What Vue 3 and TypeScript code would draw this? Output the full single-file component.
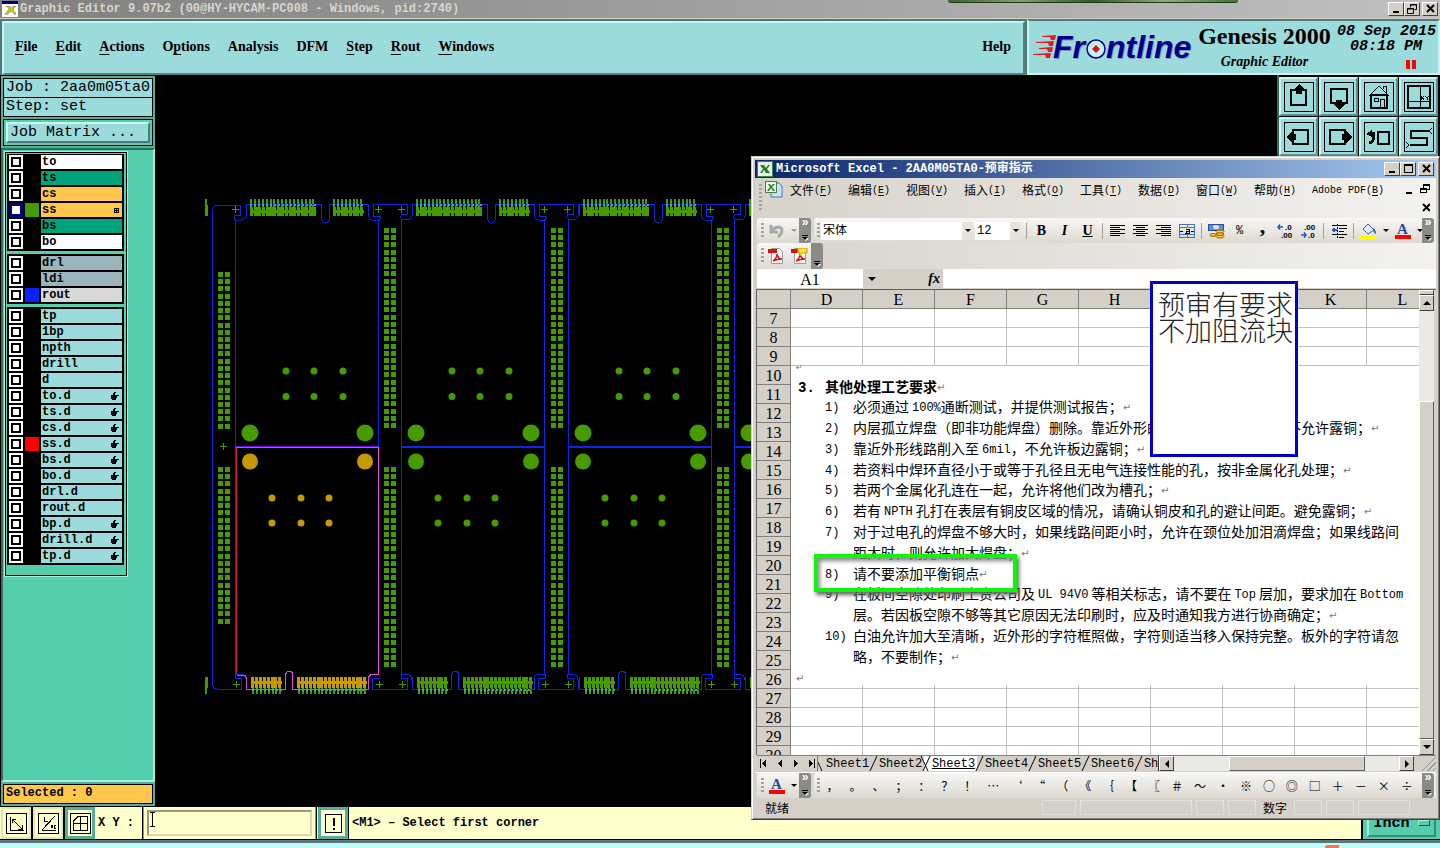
<script setup lang="ts">
import { ref } from 'vue'

interface Layer { name: string; tone: string; swatch?: string; hand?: boolean; grid?: boolean; active?: boolean }

const menus = [
  ['', 'F', 'ile'], ['', 'E', 'dit'], ['', 'A', 'ctions'], ['O', 'p', 'tions'], ['Analysis', '', ''],
  ['DFM', '', ''], ['', 'S', 'tep'], ['', 'R', 'out'], ['', 'W', 'indows'],
]

const layerGroups: Layer[][] = [
  [
    { name: 'to', tone: 'white' }, { name: 'ts', tone: 'green' }, { name: 'cs', tone: 'amber' },
    { name: 'ss', tone: 'amber', swatch: 'sw-green', grid: true, active: true },
    { name: 'bs', tone: 'green' }, { name: 'bo', tone: 'white' },
  ],
  [{ name: 'drl', tone: 'steel' }, { name: 'ldi', tone: 'steel' }, { name: 'rout', tone: 'silver', swatch: 'sw-blue' }],
  [
    { name: 'tp', tone: 'cyan' }, { name: '1bp', tone: 'cyan' }, { name: 'npth', tone: 'cyan' },
    { name: 'drill', tone: 'cyan' }, { name: 'd', tone: 'cyan' },
    { name: 'to.d', tone: 'cyan', hand: true }, { name: 'ts.d', tone: 'cyan', hand: true },
    { name: 'cs.d', tone: 'cyan', hand: true }, { name: 'ss.d', tone: 'cyan', hand: true, swatch: 'sw-red' },
    { name: 'bs.d', tone: 'cyan', hand: true }, { name: 'bo.d', tone: 'cyan', hand: true },
    { name: 'drl.d', tone: 'cyan' }, { name: 'rout.d', tone: 'cyan' }, { name: 'bp.d', tone: 'cyan', hand: true },
    { name: 'drill.d', tone: 'cyan', hand: true }, { name: 'tp.d', tone: 'cyan', hand: true },
  ],
]

const coords = ref('')

/* board artwork */
const boards = [0, 166, 333, 499].map((x, i) => ({ i, x }))
const fingers = (start: number, count: number) => Array.from({ length: count }, (_, i) => start + Math.round(i * 3.9))
const topFingers = [...fingers(250, 17), ...fingers(333, 8)]
const bottomFingers = [...fingers(252, 8), ...fingers(298, 18)]
const rows = (start: number, count: number) => Array.from({ length: count }, (_, i) => start + Math.round(i * 7.22))
const longRows = [...rows(228, 28), ...rows(467, 28)]
const edgeRows = [...rows(272, 22), ...rows(467, 22)]
const stripX = [384, 551, 717]
const crossX = [236, 379, 402, 545, 568, 711, 734]

const tools = ['up', 'down', 'home', 'quad', 'left', 'right', 'back', 'snake']

/* workbook */
const xlMenus = [['文件', 'F'], ['编辑', 'E'], ['视图', 'V'], ['插入', 'I'], ['格式', 'O'], ['工具', 'T'], ['数据', 'D'], ['窗口', 'W'], ['帮助', 'H']]
const cols = ['D', 'E', 'F', 'G', 'H', '', '', 'K', 'L']
const rowNumbers = Array.from({ length: 24 }, (_, i) => i + 7)
const sheets = ['Sheet1', 'Sheet2', 'Sheet3', 'Sheet4', 'Sheet5', 'Sheet6', 'Sheet7']
const symbols = ['，', '。', '、', '；', '：', '？', '！', '…', '‘', '“', '（', '《', '｛', '【', '〖', '＃', '～', '·', '※', '○', '◎', '□', '＋', '－', '×', '÷']
const font = ref('宋体')
const size = ref('12')

const docLines = [
  ['1)', '必须通过 100%通断测试，并提供测试报告；', '↵'],
  ['2)', '内层孤立焊盘（即非功能焊盘）删除。靠近外形的|不允许露铜；', '↵'],
  ['3)', '靠近外形线路削入至 6mil，不允许板边露铜；', '↵'],
  ['4)', '若资料中焊环直径小于或等于孔径且无电气连接性能的孔，按非金属化孔处理；', '↵'],
  ['5)', '若两个金属化孔连在一起，允许将他们改为槽孔；', '↵'],
  ['6)', '若有 NPTH 孔打在表层有铜皮区域的情况，请确认铜皮和孔的避让间距。避免露铜；', '↵'],
  ['7)', '对于过电孔的焊盘不够大时，如果线路间距小时，允许在颈位处加泪滴焊盘；如果线路间', ''],
  ['', '距大时，则允许加大焊盘；', '↵'],
  ['8)', '请不要添加平衡铜点', '↵'],
  ['9)', '在板间空隙处印刷上贵公司及 UL 94V0 等相关标志，请不要在 Top 层加，要求加在 Bottom', ''],
  ['', '层。若因板空隙不够等其它原因无法印刷时，应及时通知我方进行协商确定；', '↵'],
  ['10)', '白油允许加大至清晰，近外形的字符框照做，字符则适当移入保持完整。板外的字符请忽', ''],
  ['', '略，不要制作；', '↵'],
]
const parts = (s: string) => s.split(/( ?[A-Za-z0-9]+(?: [A-Za-z0-9]+)*[% ]?|\|)/).filter(p => p !== '')
const isLatin = (s: string) => /[A-Za-z0-9]/.test(s)
</script>

<template>
  <div class="desk">
    <div class="photo-edge"></div>
    <header class="titlebar">
      <svg class="app-ico" width="16" height="16" viewBox="0 0 16 16" shape-rendering="crispEdges"><rect width="16" height="16" fill="#fff" /><rect width="16" height="3" fill="#00007b" /><path d="M4 5l3 3-4 5h3l3-3 3 3h2l-3-5 3-3h-3l-2 2-2-2z" fill="#cfc700" stroke="#777" stroke-width=".5" /></svg>
      <span>Graphic Editor 9.07b2 (00@HY-HYCAM-PC008 - Windows, pid:2740)</span>
      <div class="winbtns">
        <button aria-label="Minimize"><svg width="11" height="10"><path d="M2 8h6" stroke="#000" stroke-width="2" /></svg></button>
        <button aria-label="Restore"><svg width="11" height="10" fill="none" stroke="#000"><path d="M3.500 3.500v-3h6v5h-2M3 1h7M.5 4.500h6v5h-6zM0 5h7" /></svg></button>
        <button class="gap" aria-label="Close"><svg width="11" height="10"><path d="M2 1l7 7M9 1l-7 7" stroke="#000" stroke-width="2" /></svg></button>
      </div>
    </header>

    <div class="top">
      <nav class="menubar">
        <button v-for="m in menus" :key="m.join('')">{{ m[0] }}<u>{{ m[1] }}</u>{{ m[2] }}</button>
        <button class="help">Help</button>
      </nav>
      <div class="brand">
        <svg class="logo" width="162" height="36" viewBox="0 0 162 36">
          <g fill="#f01820"><path d="M9 7l14-1-1 5h-4l-1-3H9z" /><path d="M3 13l18-1-1 5h-4l-1-3H3z" /><path d="M6 19l14-1-1 5h-4l-1-3H6z" /><path d="M0 25l18-1-1 5h-4l-1-3H0z" /></g>
          <g fill="#8a93b8" class="lt"><text x="21" y="30">Fr</text><text x="74" y="30">ntline</text></g>
          <g fill="#00008c" class="lt"><text x="20" y="29">Fr</text><text x="73" y="29">ntline</text></g>
          <circle cx="63" cy="20" r="9" fill="#c4f1f2" stroke="#00008c" stroke-width="1.500" />
          <path d="M63 16l4 4-4 4-4-4z" fill="#e81018" />
        </svg>
        <div class="product"><h1>Genesis 2000</h1><em>Graphic Editor</em></div>
        <div class="clock"><span>08 Sep 2015</span><span class="time">08:18 PM</span><i class="pause"></i></div>
      </div>
    </div>

    <main class="work">
      <aside class="side">
        <div class="job">
          <div class="jobline">Job : 2aa0m05ta0</div>
          <div class="jobline step">Step: set</div>
          <div class="jm"><button>Job Matrix ...</button></div>
        </div>
        <div class="layers-pane">
          <div class="layers">
            <div v-for="(g, gi) in layerGroups" :key="gi" class="group">
              <label v-for="l in g" :key="l.name" class="layer">
                <input type="checkbox" :class="{ on: l.active }" />
                <i class="swatch" :class="l.swatch"></i>
                <span :class="l.tone">{{ l.name }}
                  <svg v-if="l.hand" width="8" height="8" viewBox="0 0 8 8" shape-rendering="crispEdges"><path d="M3 0h2v1h-1v2h4v1H6v2H5v2H1V7H0V3h2V1h1z" /></svg>
                  <svg v-if="l.grid" width="5" height="5" viewBox="0 0 5 5" fill="none" stroke="#000" shape-rendering="crispEdges"><path d="M0 .5h5M0 2.500h5M0 4.500h5M.5 0v5M2.500 0v5M4.500 0v5" /></svg>
                </span>
              </label>
            </div>
          </div>
        </div>
        <div class="selected"><span>Selected : 0</span></div>
      </aside>

      <div class="canvas">
        <svg width="600" height="732" viewBox="156 76 600 732" fill="none" shape-rendering="crispEdges">
          <g fill="#479b00">
            <path d="M205 199h2v6h1v11h-3zM205 677h3v11h-1v6h-2z" />
            <template v-for="y in edgeRows" :key="'e' + y"><rect x="218" :y="y" width="5" height="5" /><rect x="225" :y="y" width="5" height="5" /></template>
            <template v-for="x in stripX" :key="'s' + x">
              <template v-for="y in longRows" :key="y"><rect :x="x" :y="y" width="5" height="5" /><rect :x="x + 7" :y="y" width="5" height="5" /></template>
            </template>
          </g>
          <g stroke="#479b00">
            <path v-for="x in crossX" :key="x" :d="`M${x - 4} 209.500h7M${x - .5} 206v7M${x - 3} 684.500h7M${x + .5} 681v7`" />
            <path d="M220 446.500h7M223.500 443v7" />
          </g>
          <path d="M212.500 685V213q0-8 6-8H240.500v10h-6v4q2 2 7 1q5-2 5-4V205M212.500 685q1 4 5 4H241.500v-11h-6v-4h7q5 2 4 15" stroke="#0a28e8" />
          <g v-for="b in boards" :key="b.i" :transform="`translate(${b.x} 0)`">
            <g fill="#479b00">
              <template v-for="(x, n) in topFingers" :key="'t' + x"><rect :x="x" y="199" width="2" height="8" /><rect :x="x" y="207" :width="n % 3 === 1 ? 4 : 3" height="9" /><rect :x="x" y="210" width="4" height="3" /></template>
              <rect v-for="x in bottomFingers" :key="'b' + x" :x="x" y="687" width="2" height="7" />
            </g>
            <g :fill="b.i ? '#479b00' : '#c49a00'">
              <template v-for="x in bottomFingers" :key="'f' + x"><rect :x="x - 1" y="677" width="3" height="11" /><rect :x="x - 1" y="681" width="4" height="3" /></template>
            </g>
            <g stroke="#0a28e8">
              <path d="M235.500 219V447M378.500 219V447M246.500 216V204.500H321.500V217q0 6 4 6t4-6V204.500H368.500V216q1 4 4 4h7q2-2-1-4h-5V204.500H407.500v10h-6q-2 4 1 5h7q4-2 3-15" />
              <path v-if="b.i" d="M235.500 447V674M378.500 447V674M246.500 677V689.500H285.500V675q1-4 4-4t3 4V689.500H368.500V677q1-3 4-3h7v4h-7V689.500H407.500v-11h-6v-4h7q5 2 4 15" />
              <path v-else d="M372.500 689.500v-11h7M372 689.500H407.500v-11h-6v-4h7q5 2 4 15M235.500 447V674" />
              <path v-if="b.i" d="M236 447H379" stroke-width="2" />
            </g>
            <g stroke="#28b8a0"><path d="M250 204.500h67M333 204.500h30M252 689.500h30M298 689.500h68" stroke-dasharray="2 2" stroke-width="2" /></g>
            <g :fill="b.i ? '#479b00' : '#c49a00'" shape-rendering="auto">
              <circle cx="250" cy="461.500" r="8" /><circle cx="365" cy="461.500" r="8" />
              <template v-for="x in [272, 301, 329]" :key="x"><circle :cx="x" cy="498" r="3.500" /><circle :cx="x" cy="523" r="3.500" /></template>
            </g>
            <g fill="#479b00" shape-rendering="auto">
              <circle cx="250" cy="433" r="8.500" /><circle cx="365" cy="433" r="8.500" />
              <template v-for="x in [286, 314, 343]" :key="x"><circle :cx="x" cy="371" r="3.500" /><circle :cx="x" cy="396.500" r="3.500" /></template>
            </g>
          </g>
          <path d="M236.500 448V674" stroke="#d01840" />
          <path d="M236 446.500H379" stroke="#6a00ff" />
          <path d="M236 447.500H378.500V674.500h-6q-4 0-4 4V689.500H292.500V675q0-4-3-4t-4 4V689.500H246.500V679q0-4-4-4h-6" stroke="#e048e0" />
        </svg>
      </div>

      <div class="tools">
        <button v-for="t in tools" :key="t" :aria-label="t">
          <svg width="30" height="30" viewBox="0 0 30 30" fill="none" stroke="#000" shape-rendering="crispEdges">
            <rect x=".5" y=".5" width="29" height="29" />
            <g v-if="t === 'up'"><path d="M12 8H7v15h15V8h-4" stroke-width="2" /><path d="M15 2l6 6h-3v4h-6V8H9z" fill="#000" stroke="none" /></g>
            <g v-if="t === 'down'"><path d="M12 21H7V7h16v14h-5" stroke-width="2" /><path d="M15 28l6-6h-3v-4h-6v4H9z" fill="#000" stroke="none" /></g>
            <g v-if="t === 'home'"><path d="M5 14L15 4l10 10" shape-rendering="auto" /><path d="M7 13v13h16V13M7 13h16" stroke-width="2" /><path d="M10.500 16.500h4v3h-4zM16.500 26v-9h4v9M19.500 7V4h3v7" /></g>
            <g v-if="t === 'quad'"><rect x="4" y="4" width="22" height="22" stroke-width="2" /><path d="M16.500 4v22M4 19.500h22M17 14l3 4M20 14l-3 4M21 14l2 2 2-2M23 16v2" /></g>
            <g v-if="t === 'left'"><path d="M9 13V8h15v14H9v-5" stroke-width="2" /><path d="M2 15l6-6v3h4v6H8v3z" fill="#000" stroke="none" /></g>
            <g v-if="t === 'right'"><path d="M21 13V8H6v14h15v-5" stroke-width="2" /><path d="M28 15l-6-6v3h-4v6h4v3z" fill="#000" stroke="none" /></g>
            <g v-if="t === 'back'"><path d="M14 10h11v12H14z" stroke-width="2" /><path d="M5 11h4v7q0 2-4 3" stroke-width="3" /><path d="M2 12l6-4v7z" fill="#000" stroke="none" /></g>
            <g v-if="t === 'snake'"><path d="M25 9H7v7h16v7H6" stroke-width="2" /><path d="M28 6l-3 3 3 3M2 20l3 3-3 3" /></g>
          </svg>
        </button>
      </div>
    </main>

    <footer class="cmd">
      <button aria-label="Diagonal"><svg width="21" height="21" fill="none" stroke="#000" shape-rendering="crispEdges"><path d="M.5.5h20v20H.5zM4.500 4v13h13M6 6l10 10M6 10V6h4M12 16h4v-4" /></svg></button>
      <button aria-label="Angle"><svg width="21" height="21" fill="none" stroke="#000" shape-rendering="crispEdges"><path d="M.5.5h20v20H.5zM4 17L17 3M4 17.500h14M6.500 4v4h3M13 12l2 3M15 12l-2 3M18 12h-2v3h2" /></svg></button>
      <button class="lit" aria-label="Grid"><svg width="21" height="21" fill="none" stroke="#000" shape-rendering="crispEdges"><path d="M.5.5h20v20H.5zM3.500 8l5-5h9v14h-14zM3 10.500h14M10.500 3v14" /></svg></button>
      <label for="xy">X Y :</label>
      <div class="field"><input id="xy" v-model="coords" type="text" /><svg class="ibeam" width="7" height="15" fill="none" stroke="#000"><path d="M1 .5h5M1 14.500h5M3.500 1v13" /></svg></div>
      <button class="lit" aria-label="Alert"><svg width="17" height="19" fill="none" stroke="#000" shape-rendering="crispEdges"><path d="M.5.5h16v18H.5z" /><path d="M8.500 4v8M8.500 14v2" stroke-width="2" /></svg></button>
      <p>&lt;M1&gt; – Select first corner</p>
      <div class="unit"><button>Inch<i></i></button></div>
    </footer>
    <div class="strip"><i></i></div>

    <section class="xl">
      <header class="xl-title">
        <svg width="16" height="16" viewBox="0 0 16 16"><rect x=".5" y=".5" width="15" height="15" fill="#e6f2df" stroke="#3b8544" /><path d="M3 4h4l2 3 2-3h2l-3 4 3 4H9L7 9l-2 3H3l3-4z" fill="#237a31" /></svg>
        <span>Microsoft Excel - 2AA0M05TA0-预审指示</span>
        <div class="winbtns">
          <button aria-label="Minimize"><svg width="11" height="10"><path d="M2 8h6" stroke="#000" stroke-width="2" /></svg></button>
          <button aria-label="Maximize"><svg width="11" height="10" fill="none" stroke="#000" shape-rendering="crispEdges"><path d="M1.500.5h8v8h-8zM1 1.500h9" /></svg></button>
          <button class="gap" aria-label="Close"><svg width="11" height="10"><path d="M2 1l7 7M9 1l-7 7" stroke="#000" stroke-width="2" /></svg></button>
        </div>
      </header>
      <nav class="xl-menu">
        <i class="grip"></i>
        <svg class="doc-ico" width="18" height="17" viewBox="0 0 18 17"><path d="M6 2h8l3 3v11H6z" fill="#cfe0fa" stroke="#4a72b5" /><rect x=".5" y=".5" width="11" height="11" fill="#e8f4e4" stroke="#3b8544" /><path d="M3 3h2l1 2 2-2h2L7 6l3 4H8L6 7l-2 3H2l3-4z" fill="#237a31" /></svg>
        <button v-for="m in xlMenus" :key="m[1]">{{ m[0] }}<b>(<u>{{ m[1] }}</u>)</b></button>
        <button class="pdf"><b>Adobe PDF(<u>B</u>)</b></button>
        <svg class="mdi" width="24" height="32" fill="none" stroke="#000" shape-rendering="crispEdges"><path d="M0 11.500h6M0 12.500h6M17.500 6.500v-3h6v5h-3M17 4.500h7M14.500 7.500h6v4h-6zM14 8.500h7" /><path d="M17 23l7 7M24 23l-7 7" stroke-width="2" shape-rendering="auto" /></svg>
      </nav>
      <div class="bar">
        <div class="tb undo"><i class="grip"></i><button aria-label="Undo"><svg width="16" height="14" fill="none" stroke="#a9a9a9" stroke-width="3"><path d="M3 6q8-6 10 0q0 4-4 7M2 1v7h7" /></svg></button><i class="dd dim"></i></div>
        <i class="cap"><b>»</b></i>
        <div class="tb wide">
          <i class="grip"></i>
          <label class="combo font"><select v-model="font" aria-label="Font"><option>宋体</option></select><i class="dd"></i></label>
          <label class="combo size"><select v-model="size" aria-label="Font size"><option>12</option></select><i class="dd"></i></label>
          <i class="sep"></i>
          <button class="fmt">B</button><button class="fmt it">I</button><button class="fmt un">U</button>
          <i class="sep"></i>
          <button aria-label="Align left"><svg width="15" height="12" stroke="#000" shape-rendering="crispEdges"><path d="M0 .5h15M0 2.500h10M0 4.500h15M0 6.500h10M0 8.500h15M0 10.500h10" /></svg></button>
          <button aria-label="Center"><svg width="15" height="12" stroke="#000" shape-rendering="crispEdges"><path d="M0 .5h15M3 2.500h9M0 4.500h15M3 6.500h9M0 8.500h15M3 10.500h9" /></svg></button>
          <button aria-label="Align right"><svg width="15" height="12" stroke="#000" shape-rendering="crispEdges"><path d="M0 .5h15M5 2.500h10M0 4.500h15M5 6.500h10M0 8.500h15M5 10.500h10" /></svg></button>
          <button aria-label="Merge"><svg width="16" height="14" fill="none" stroke="#4a72b5" shape-rendering="crispEdges"><path d="M.5.5h15v13H.5zM1 3.500h14M1 10.500h14M8.500 0v4M8.500 10v4" /><path d="M1 7h3M12 7h3M7 5h3v4M7 9V7h3M6 9h5" stroke="#000" /></svg></button>
          <i class="sep"></i>
          <button aria-label="Currency"><svg width="17" height="16"><rect x=".5" y="1.500" width="15" height="6" fill="#5f8be0" stroke="#284f9c" /><ellipse cx="8" cy="4" rx="3" ry="2" fill="#dce8ff" /><g fill="#ffc93c" stroke="#9a6500"><ellipse cx="5" cy="12" rx="3" ry="1.500" /><ellipse cx="12" cy="13.500" rx="4" ry="1.500" /><ellipse cx="12" cy="11" rx="4" ry="1.500" /><ellipse cx="12" cy="8.500" rx="4" ry="1.500" /></g></svg></button>
          <button class="pct">%</button><button class="comma">,</button>
          <button class="dec" aria-label="Increase decimal"><svg width="18" height="16"><path d="M1 4h5M3 1.500L1 4l2 2.500" fill="none" stroke="#1c58d0" stroke-width="1.500" /><text x="8" y="7">.0</text><text x="4" y="15">.00</text></svg></button>
          <button class="dec" aria-label="Decrease decimal"><svg width="18" height="16"><path d="M1 12h5M4 9.500L6 12l-2 2.500" fill="none" stroke="#1c58d0" stroke-width="1.500" /><text x="4" y="7">.00</text><text x="8" y="15">.0</text></svg></button>
          <i class="sep"></i>
          <button aria-label="Indent"><svg width="16" height="14" stroke="#000" shape-rendering="crispEdges"><path d="M1 1.500h15M8 4.500h8M8 7.500h5M1 10.500h15M8 13h5" /><path d="M6.500 0v14" stroke-dasharray="2 1" /><path d="M1 6h5M3 4v4" stroke="#1c58d0" stroke-width="2" /></svg></button>
          <i class="sep"></i>
          <button aria-label="Fill color"><svg width="17" height="16"><path d="M3 6l5-5 6 6-6 4z" fill="#e8f0ff" stroke="#3a5fa8" /><path d="M13 5q3 1 3 6q-3-1-3-6" fill="#3a5fa8" /><rect y="12" width="16" height="4" fill="#ffff00" /></svg></button><i class="dd"></i>
          <button aria-label="Font color"><svg width="16" height="16"><text class="ac" x="2" y="11">A</text><rect y="12" width="16" height="4" fill="#ff0000" /></svg></button><i class="dd"></i>
        </div>
        <i class="cap"><b>»</b></i>
      </div>
      <div class="bar second">
        <div class="tb">
          <i class="grip"></i>
          <button v-for="n in 2" :key="n" :aria-label="'PDF ' + n"><svg width="17" height="16"><path d="M3.500.5h8l3 3v12h-11z" fill="#fff" stroke="#9b9b9b" /><rect y="1" width="9" height="4" fill="#e01010" /><path d="M5 13q4-3 4-7q1 5 5 5q-5 0-9 2" fill="none" stroke="#e01010" stroke-width="1.500" /><path v-if="n === 2" d="M7 0h9v5h-5l-2 3V5H7z" fill="#ffe02a" stroke="#c9a200" /></svg></button>
        </div>
        <i class="cap"></i>
      </div>
      <div class="formula">
        <input class="name" value="A1" aria-label="Name box" />
        <i class="dd"></i><em>fx</em>
        <input class="fx" value="" aria-label="Formula" />
      </div>

      <div class="book">
        <div class="grid-area">
          <table>
            <thead><tr><th class="corner"></th><th v-for="(c, i) in cols" :key="i">{{ c }}</th></tr></thead>
            <tbody><tr v-for="r in rowNumbers" :key="r"><th>{{ r }}</th><td v-for="(c, i) in cols" :key="i"></td></tr></tbody>
          </table>
          <article class="doc">
            <i class="ret first">↵</i>
            <h2><span>3.</span>其他处理工艺要求<i class="ret">↵</i></h2>
            <div class="lines">
              <p v-for="(l, i) in docLines" :key="i">
                <span class="no">{{ l[0] }}</span><template v-for="(p, j) in parts(l[1])" :key="j"><i v-if="p === '|'" class="hidden-run"></i><span v-else-if="isLatin(p)" class="lat" :class="{ tight: !p.endsWith(' ') }">{{ p.trim() }}</span><template v-else>{{ p }}</template></template><i v-if="l[2]" class="ret">↵</i>
              </p>
            </div>
            <i class="ret last">↵</i>
          </article>
          <div class="mark"></div>
        </div>
        <div class="vscroll"><i class="split"></i><button aria-label="Scroll up"><i class="tri up"></i></button><i class="room"></i><i class="thumb"></i><button aria-label="Scroll down"><i class="tri"></i></button></div>
      </div>

      <div class="tabs">
        <div class="nav"><svg width="58" height="9" shape-rendering="crispEdges"><path d="M4 0v9H3V0zM9 0v9L5 4.500zM25 0v9l-4-4.500zM37 0v9l4-4.500zM52 0v9l4-4.500zM57 0v9h1V0z" /></svg></div>
        <div class="sheets"><button v-for="s in sheets" :key="s" :class="{ cur: s === 'Sheet3' }"><span>{{ s }}</span></button></div>
        <div class="hscroll"><button aria-label="Scroll left"><i class="tri l"></i></button><i class="room"></i><i class="thumb"></i><i class="room short"></i><button aria-label="Scroll right"><i class="tri r"></i></button></div>
        <i class="size-grip"></i>
      </div>

      <div class="bar bottom">
        <div class="tb"><i class="grip"></i><button aria-label="Font color"><svg width="16" height="16"><text class="ac" x="2" y="11">A</text><rect y="12" width="16" height="4" fill="#ff0000" /></svg></button><i class="dd"></i></div>
        <i class="cap"><b>»</b></i>
        <div class="tb wide"><i class="grip"></i><div class="syms"><button v-for="s in symbols" :key="s">{{ s }}</button></div></div>
        <i class="cap"><b>»</b></i>
      </div>
      <div class="xl-status"><span>就绪</span><i class="w34"></i><i class="w112"></i><i></i><i></i><b>数字</b><i></i><i></i><i class="w52"></i></div>

      <div class="note">预审有要求<br />不加阻流块</div>
    </section>
  </div>
</template>

<style>
html, body { margin: 0; background: #000; overflow: hidden; }
</style>

<style scoped>
* { box-sizing: border-box; }
button { font: inherit; color: inherit; padding: 0; margin: 0; border: 0; background: none; display: flex; align-items: center; justify-content: center; }
button svg, .app-ico { flex: none; display: block; }
i { font-style: normal; }
.desk { position: relative; height: 100vh; display: flex; flex-direction: column; background: #000; color: #000; font-family: "Liberation Mono", "Noto Sans CJK SC", monospace; overflow: hidden; }
.photo-edge { position: absolute; top: 0; right: 202px; width: 290px; height: 3px; background: linear-gradient(90deg, #41602f, #8a9a74, #35572a, #9aa58e, #45702f); border-bottom: 1px solid #1e3a12; border-radius: 0 0 4px 4px; }
.titlebar { flex: none; height: 19px; display: flex; align-items: center; gap: 2px; padding: 0 2px; background: linear-gradient(90deg, #808080, #c0c0c0); color: #d8d4cc; font-size: 12px; font-weight: bold; border-bottom: 1px solid #d4d0c8; }
.titlebar span, .xl-title span { flex: 1; white-space: nowrap; }
.winbtns { display: flex; }
.winbtns button { width: 16px; height: 14px; background: #d4d0c8; border: 1px solid; border-color: #fff #404040 #404040 #fff; }
.winbtns .gap { margin-left: 2px; }

.top { flex: none; height: 56px; display: flex; background: #4f7a78; }
.menubar { flex: 1; display: flex; align-items: center; gap: 18px; padding: 0 12px 2px 11px; margin: 2px 2px 0 2px; background: #9cdbdb; border: 2px solid; border-color: #c8f4f4 #5a8080 #5a8080 #c8f4f4; font-family: "Liberation Serif", serif; font-size: 14px; font-weight: bold; }
.menubar button { display: block; }
.menubar u { text-underline-offset: 3px; }
.menubar .help { margin-left: auto; }
.brand { flex: none; width: 413px; display: flex; align-items: flex-start; background: #9cdbdb; border: 2px solid; border-color: #4f7a78 #c8f4f4 #c8f4f4 #c8f4f4; }
.logo { flex: none; margin: 8px 1px 0 4px; }
.lt { font: italic bold 32px "Liberation Sans", sans-serif; }
.product { font-family: "Liberation Serif", serif; width: 137px; text-align: center; white-space: nowrap; }
.product h1 { margin: 0; font-size: 24px; line-height: 30px; font-weight: bold; }
.product em { display: block; font-size: 14px; line-height: 22px; font-weight: bold; }
.clock { flex: 1; display: flex; flex-direction: column; align-items: flex-end; padding: 3px 2px 0 0; font-size: 15px; font-style: italic; font-weight: bold; line-height: 15px; white-space: nowrap; }
.time { padding-right: 14px; }
.pause { width: 10px; height: 9px; margin: 6px 20px 0 0; border: solid #f00; border-width: 0 4px; }

.work { flex: 1; min-height: 0; display: flex; }
.side { flex: none; width: 156px; display: flex; flex-direction: column; padding: 1px 1px 1px 1px; }
.job { background: #54b09a; padding: 2px; display: flex; flex-direction: column; font-size: 15px; height: 72px; }
.jobline { border: 1px solid #000; background: #9cdbdb; height: 20px; line-height: 18px; padding-left: 2px; white-space: nowrap; }
.step { height: 19px; line-height: 17px; border-top: 0; }
.jm { margin-top: 2px; border: 1px solid #000; background: #54cead; padding: 2px; height: 27px; }
.jm button { width: 100%; height: 21px; justify-content: flex-start; padding-left: 2px; background: #9cdbdb; border: 2px solid; border-color: #c8f8f0 #4f7a78 #4f7a78 #c8f8f0; }
.layers-pane { flex: 1; background: #54cead; border: 2px solid; border-color: #2f6a5c #a8eedb #a8eedb #3a6b62; padding: 2px 0 0 2px; }
.layers { width: 122px; height: 424px; padding: 1px; border: 1px solid #000; outline: 1px solid #a8eedb; background: #54cead; display: flex; flex-direction: column; gap: 3px; }
.group { background: #000; padding: 0 1px 1px; width: 117px; }
.group + .group { padding-top: 1px; }
.layer { display: flex; align-items: center; gap: 2px; height: 16px; }
.layer input { appearance: none; margin: 0 0 0 1px; width: 14px; height: 14px; border: 2px solid #fff; background: #fff; box-shadow: inset 0 0 0 2px #000; }
.layer input.on { border-color: #00008c; box-shadow: inset 0 0 0 1px #00008c; }
.swatch { width: 14px; height: 14px; }
.sw-green { background: #479b00; } .sw-blue { background: #0a20ff; } .sw-red { background: #f00; }
.layer span { flex: 1; height: 14px; line-height: 14px; margin-right: 1px; padding: 0 3px 0 1px; display: flex; justify-content: space-between; align-items: center; font-size: 12px; font-weight: bold; }
.white { background: #fff; } .green { background: #00a47c; } .amber { background: #ffc84d; } .steel { background: #9cb4bc; } .silver { background: #d8d8d8; } .cyan { background: #9cdbdb; }
.selected { height: 24px; background: #54b09a; padding: 2px; }
.selected span { display: block; height: 20px; line-height: 17px; padding-left: 2px; background: #ffc84d; border: 1px solid #000; font-size: 12px; font-weight: bold; }
.canvas { flex: 1; min-width: 0; overflow: hidden; padding-top: 1px; }
.canvas svg { display: block; }
.tools { flex: none; width: 163px; display: grid; grid-template-columns: repeat(4, 40px); grid-auto-rows: 40px; align-content: start; padding: 2px 0 0; border-left: 2px solid #2f6a5c; }
.tools button { width: 39px; height: 39px; background: #9cdbdb; border: 2px solid; border-color: #c8f4f4 #5a8d8d #5a8d8d #c8f4f4; }

.cmd { flex: none; height: 33px; display: flex; align-items: stretch; background: #ffffcb; font-size: 12px; font-weight: bold; padding-left: 1px; border-bottom: 1px solid #000; }
.cmd > button { width: 32px; border-right: 2px solid #000; box-shadow: inset 0 0 0 2px #e4e4b4; }
.cmd > .lit { width: 30px; box-shadow: inset 0 0 0 3px #54b09a; border-right: 0; }
.cmd label { width: 48px; padding-left: 3px; line-height: 32px; white-space: nowrap; }
.field { position: relative; flex: none; width: 173px; padding: 3px; border: solid #54b09a; border-width: 0 1px; outline: 1px solid #000; margin-right: 2px; }
.field input { width: 100%; height: 26px; padding: 0 12px; background: #ffffcb; border: 2px solid; border-color: #9a9a78 #d8d8b0 #d8d8b0 #9a9a78; font: inherit; }
.ibeam { position: absolute; left: 5px; top: 5px; }
.cmd p { flex: 1; margin: 0; padding-left: 3px; line-height: 32px; border-left: 1px solid #000; white-space: nowrap; }
.unit { flex: none; width: 79px; padding: 2px 4px; background: #54cead; border-left: 2px solid #000; }
.unit button { width: 100%; height: 28px; gap: 8px; border: 2px solid; border-color: #a8eedb #3a8b76 #3a8b76 #a8eedb; font-size: 15px; }
.unit i { width: 12px; height: 6px; background: #54cead; border: 1px solid; border-color: #a8eedb #246 #246 #a8eedb; }
.strip { flex: none; position: relative; height: 8px; background: #c4fafa; border-top: 3px solid #5a7a7a; }
.strip i { position: absolute; right: 101px; bottom: 0; width: 14px; height: 3px; background: #f07850; border-radius: 8px 0 0; }

.xl { position: absolute; top: 156px; right: 0; bottom: 28px; width: 689px; padding: 3px 3px 2px; display: flex; flex-direction: column; background: #d4d0c8; border: 1px solid; border-color: #d4d0c8 #404040 #404040 #d4d0c8; box-shadow: inset 1px 1px #fff, inset -1px -1px #808080; font-family: "Liberation Mono", "Noto Sans CJK SC", monospace; font-size: 12px; }
.xl > * { flex: none; }
.xl-title { height: 18px; display: flex; align-items: center; gap: 3px; padding: 0 2px; background: linear-gradient(90deg, #0a246a, #a6caf0); color: #fff; font-weight: bold; line-height: 18px; }
.xl-menu { height: 40px; display: flex; align-items: flex-start; padding: 3px 6px 0 4px; background: linear-gradient(90deg, #d7d3cb, #f3f2ef); }
.xl-menu button { width: 58px; height: 18px; justify-content: flex-start; white-space: nowrap; }
.xl-menu b { font-weight: normal; font-size: 10px; }
.xl-menu u { text-underline-offset: 2px; }
.xl-menu .pdf { width: auto; }
.doc-ico { margin: 0 7px 0 3px; }
.mdi { margin-left: auto; }
.grip { flex: none; width: 3px; height: 16px; background: repeating-linear-gradient(#a6a39b 0 2px, transparent 2px 4px); }
.xl-menu .grip { height: 26px; margin-top: 3px; }
.bar { height: 25px; display: flex; background: linear-gradient(90deg, #d7d3cb, #f3f2ef); padding: 0 2px; }
.tb { display: flex; align-items: center; background: linear-gradient(#f8f7f5, #dcd9d0); border-radius: 3px 0 0 3px; padding-left: 4px; }
.tb .grip { margin-right: 1px; }
.tb.wide { flex: 1; min-width: 0; margin-left: 3px; padding-left: 3px; }
.tb button { flex: none; width: 23px; height: 22px; }
.dd { flex: none; width: 11px; display: flex; justify-content: center; }
.dd::before, .cap::after { content: ""; border: solid transparent; border-width: 3px 3px 0; border-top-color: #000; }
.dim::before { border-top-color: #999; }
.cap { flex: none; width: 12px; display: flex; flex-direction: column; align-items: center; justify-content: flex-end; gap: 1px; padding-bottom: 3px; background: #8a8a86; color: #fff; border-radius: 0 3px 3px 0; }
.cap b { font-size: 12px; line-height: 10px; margin-bottom: auto; }
.cap::before { content: ""; width: 6px; height: 1px; background: #000; order: 1; }
.cap::after { order: 2; filter: drop-shadow(1px 1px #fff); }
.combo { flex: none; display: flex; align-items: center; height: 18px; background: #fff; margin-right: 2px; }
.combo .dd { background: #e6e3dc; height: 18px; align-items: center; }
.combo select { appearance: none; border: 0; background: none; padding: 0 2px; font: inherit; width: 141px; }
.combo.size select { width: 35px; }
.sep { flex: none; width: 1px; height: 16px; margin: 0 3px; background: #a6a39b; }
.fmt { font-family: "Liberation Serif", serif; font-size: 14px; font-weight: bold; }
.it { font-style: italic; } .un { text-decoration: underline; }
.pct { font-size: 12px; } .comma { font-family: "Liberation Serif", serif; font-size: 22px; font-weight: bold; line-height: 10px; padding-bottom: 10px; }
.dec { font: bold 8px "Liberation Sans", sans-serif; }
.ac { font: bold 15px "Liberation Serif", serif; fill: #2b4a9c; }
.second { height: 26px; }
.formula { height: 19px; display: flex; align-items: center; background: #d4d0c8; padding-left: 2px; }
.formula input { border: 0; background: #fff; height: 19px; padding: 0; font: 16px "Liberation Serif", serif; }
.formula .name { width: 106px; text-align: center; padding-top: 2px; }
.formula .dd { width: 17px; }
.formula .dd::before { border-width: 4px 4px 0; }
.formula em { flex: none; width: 63px; padding-right: 3px; text-align: right; font: italic bold 14px "Liberation Serif", serif; }
.fx { flex: 1; min-width: 0; }
.xl > .book { flex: 1; min-height: 0; margin-top: 1px; display: flex; border: solid #606060; border-width: 1px 0 0 1px; margin-left: 1px; padding-right: 2px; }
.grid-area { position: relative; flex: 1; min-width: 0; overflow: hidden; background: #fff; }
table { border-collapse: separate; border-spacing: 0; table-layout: fixed; width: 682px; font-family: "Liberation Serif", serif; font-size: 16px; }
th, td { height: 19px; padding: 2px 0 0; border: solid #c0c0c0; border-width: 0 1px 1px 0; line-height: 16px; }
th { background: #d4d0c8; border-color: #808080; font-weight: normal; }
.corner { width: 34px; }
.doc { position: absolute; left: 34px; top: 76px; width: 640px; height: 319px; background: #fff; font-size: 14px; white-space: nowrap; text-spacing-trim: space-all; }
.doc h2 { margin: 0; font-size: 14px; line-height: 20px; padding-left: 7px; display: flex; }
.doc h2 span { width: 27px; }
.lines { height: 270px; display: grid; grid-auto-rows: 1fr; align-items: center; }
.lines p { margin: 0; padding-left: 34px; line-height: 20px; height: 20px; display: flex; align-items: center; }
.no { width: 28px; font-size: 12px; }
.lat { font-size: 12px; margin: 0 3px; } .tight { margin-right: 0; }
.hidden-run { width: 126px; }
.ret { font: 10px/20px "DejaVu Sans", sans-serif; color: #777; }
.first { display: block; height: 12px; margin-left: 5px; font-size: 8px; line-height: 4px; }
.last { display: block; margin-left: 5px; line-height: 22px; }
.mark { position: absolute; left: 57px; top: 264px; width: 203px; height: 38px; border: 4px solid #0ff60c; box-shadow: 2px 3px 4px #666, inset 2px 3px 4px #888; }
.note { position: absolute; left: 398px; top: 124px; width: 148px; height: 176px; padding: 7px 0 0 5px; border: 3px solid #0000c8; background: #fff; color: #222; font: 300 27px/26px "Noto Sans CJK SC", sans-serif; white-space: nowrap; }
.vscroll { flex: none; width: 15px; display: flex; flex-direction: column; background: #ebe9e4; }
.split { height: 5px; background: #d4d0c8; border: 1px solid; border-color: #fff #404040 #404040 #fff; }
.vscroll button, .hscroll button { flex: none; width: 15px; height: 16px; background: #d4d0c8; border: 1px solid; border-color: #fff #404040 #404040 #fff; }
.thumb { background: #d4d0c8; border: 1px solid; border-color: #fff #606060 #606060 #fff; }
.room { flex: 1; background: #ebe9e4; }
.vscroll .room { flex: none; height: 90px; } .vscroll .thumb { flex: 1; }
.tri { border: solid transparent; border-width: 4px 4px 0; border-top-color: #000; }
.tri.up { transform: rotate(180deg); } .tri.l { transform: rotate(90deg); } .tri.r { transform: rotate(-90deg); }
.tabs { height: 16px; display: flex; margin: 0 0 1px 2px; border-top: 1px solid #808080; }
.nav { width: 60px; display: flex; align-items: center; }
.sheets { width: 341px; display: flex; overflow: hidden; border-left: 1px solid #808080; }
.sheets button { position: relative; flex: none; width: 53px; padding-left: 6px; }
.sheets button::after { content: ""; position: absolute; right: -3px; top: 0; height: 15px; width: 1px; background: #000; transform: skewX(-25deg); z-index: 1; }
.sheets button:first-child::before, .sheets .cur::before { content: ""; position: absolute; left: 0; top: 0; height: 15px; width: 1px; background: #000; transform: skewX(25deg); z-index: 1; }
.cur { background: #fff; } .cur span { text-decoration: underline; }
.hscroll { flex: 1; display: flex; border-left: 1px solid #404040; }
.hscroll button { height: 15px; } .hscroll .thumb { width: 136px; } .hscroll .short { flex: none; width: 34px; }
.size-grip { width: 22px; border-left: 1px solid #404040; background: repeating-linear-gradient(135deg, transparent 0 3px, #999 3px 4px); clip-path: polygon(100% 0, 100% 100%, 20% 100%); }
.bottom { height: 26px; border-top: 1px solid #fff; }
.tb .syms { flex: 1; display: flex; padding-right: 4px; }
.tb .syms button { flex: 1; width: auto; font-size: 12px; font-family: "Noto Sans CJK SC", sans-serif; }
.xl-status { height: 19px; display: flex; align-items: center; gap: 4px; padding: 0 26px 0 10px; }
.xl-status span { margin-right: auto; }
.xl-status b { font-weight: normal; padding: 0 3px; }
.xl-status i { width: 28px; height: 15px; border: 1px solid #e2dfd9; }
.xl-status .w34 { width: 34px; } .xl-status .w112 { width: 112px; } .xl-status .w52 { width: 52px; }
</style>
